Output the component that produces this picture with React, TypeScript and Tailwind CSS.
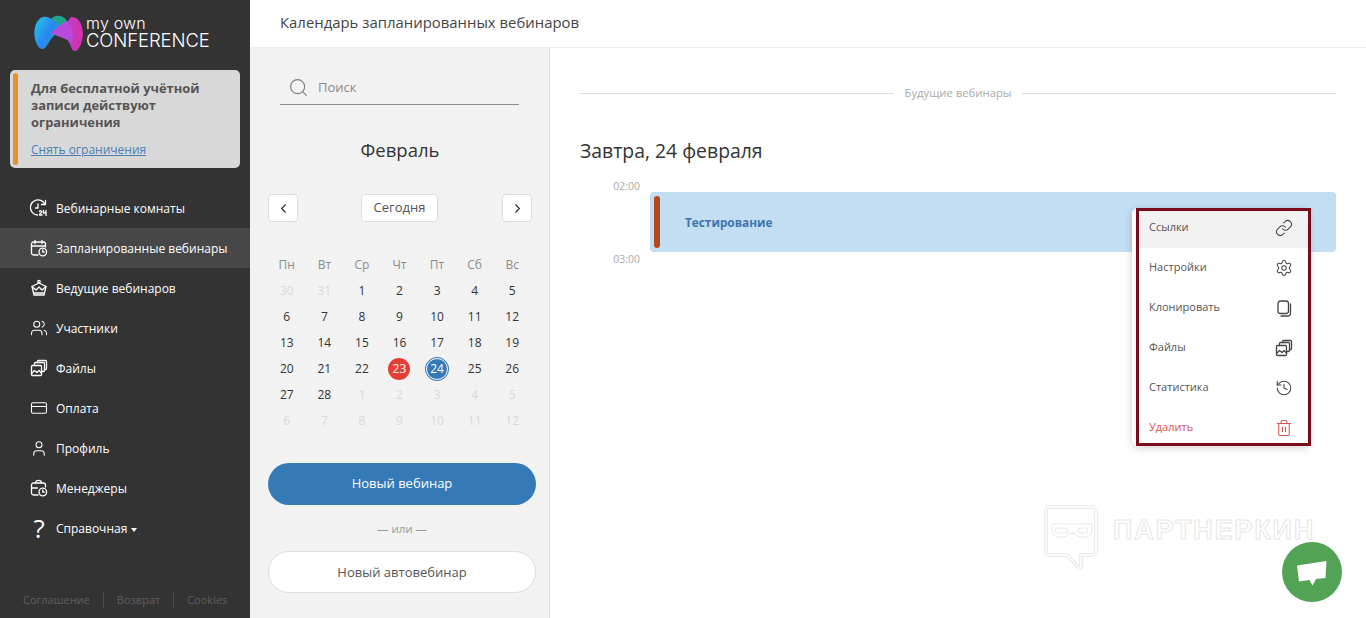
import React from "react";
import { Search, ChevronLeft, ChevronRight, Link, Settings, History, Trash2, User, Users, CreditCard } from "lucide-react";

const font = "font-['Open_Sans','Noto_Sans',sans-serif]";

function I({ children, size = 18 }: { children: React.ReactNode; size?: number }) {
  return (
    <svg width={size} height={size} viewBox="0 0 18 18" fill="none" stroke="currentColor" strokeWidth="1.3" strokeLinecap="round" strokeLinejoin="round">
      {children}
    </svg>
  );
}
const Rooms = () => (
  <I>
    <path d="M15 5.5A7.6 7.6 0 1 0 7.5 16" />
    <path d="M15.5 1.5v4h-4" />
    <path d="M8 5v4H5.5" />
    <path d="M9.5 12.5c.3-1 2.400-1 2.400.2 0 1-2.400 1.800-2.400 3.300h2.600M13.500 11.500v2.500h2.500M16 11.500V16.500" />
  </I>
);
const CalClock = () => (
  <I>
    <path d="M8 16H3.500A2 2 0 0 1 1.500 14V5A2 2 0 0 1 3.500 3h10A2 2 0 0 1 15.500 5V8" />
    <path d="M1.500 7h14M5 1.500v3M12 1.500v3" />
    <circle cx="12.800" cy="13" r="3.800" />
    <path d="M12.800 11v2.200h1.500" />
  </I>
);
const Crown = () => (
  <I>
    <path d="M4 16 2 7.500 9 4l7 3.500L14 16z" />
    <path d="M2 7.500 6 11l3-3 3 3 4-3.500M4.500 14h9" />
    <circle cx="9" cy="2.500" r="1.200" />
  </I>
);
const Files = () => (
  <I>
    <rect x="1.500" y="6.500" width="10" height="10" rx="1" />
    <path d="M4.500 6.500V4.500a1 1 0 0 1 1-1h8a1 1 0 0 1 1 1v7a1 1 0 0 1-1 1h-2" />
    <path d="M7.500 3.500V2.500a1 1 0 0 1 1-1h7a1 1 0 0 1 1 1v7a1 1 0 0 1-1 1h-1" />
    <path d="m1.500 14.500 3-3 2.500 2 2-2 2.500 2.500" />
  </I>
);
const Bag = () => (
  <I>
    <path d="M8 16H3.500A2 2 0 0 1 1.500 14V6A2 2 0 0 1 3.500 4h10A2 2 0 0 1 15.500 6V8" />
    <path d="M1.500 9h6M5.500 4c0-3.500 6-3.500 6 0" />
    <circle cx="12.800" cy="13" r="3.800" />
    <path d="M12.800 11v2.200h1.500" />
  </I>
);
const Clone = () => (
  <I>
    <rect x="3" y="2" width="10.500" height="12.500" rx="2.500" />
    <path d="M15.500 5v9.500a2.500 2.500 0 0 1-2.500 2.500H6" />
  </I>
);

const nav: { label: string; icon: React.ReactNode; active?: boolean; caret?: boolean }[] = [
  { label: "Вебинарные комнаты", icon: <Rooms /> },
  { label: "Запланированные вебинары", icon: <CalClock />, active: true },
  { label: "Ведущие вебинаров", icon: <Crown /> },
  { label: "Участники", icon: <Users size={18} strokeWidth={1.4} /> },
  { label: "Файлы", icon: <Files /> },
  { label: "Оплата", icon: <CreditCard size={18} strokeWidth={1.4} /> },
  { label: "Профиль", icon: <User size={19} strokeWidth={1.4} /> },
  { label: "Менеджеры", icon: <Bag /> },
  { label: "Справочная", icon: <span className="text-[26px] leading-none font-normal">?</span>, caret: true },
];

const days: { d: number; m?: boolean }[] = [
  ...[30, 31].map((d) => ({ d, m: true })),
  ...Array.from({ length: 28 }, (_, i) => ({ d: i + 1 })),
  ...[1, 2, 3, 4, 5, 6, 7, 8, 9, 10, 11, 12].map((d) => ({ d, m: true })),
];

const menu: { label: string; icon: React.ReactNode; red?: boolean; hover?: boolean }[] = [
  { label: "Ссылки", icon: <Link size={18} strokeWidth={1.4} />, hover: true },
  { label: "Настройки", icon: <Settings size={18} strokeWidth={1.4} /> },
  { label: "Клонировать", icon: <Clone /> },
  { label: "Файлы", icon: <Files /> },
  { label: "Статистика", icon: <History size={18} strokeWidth={1.4} /> },
  { label: "Удалить", icon: <Trash2 size={18} strokeWidth={1.4} />, red: true },
];

function Logo() {
  return (
    <div className="flex items-center h-[70px] pb-[5px] pl-[33px] gap-[3px]">
      <svg width="50" height="40" viewBox="0 0 50 40">
        <defs>
          <linearGradient id="lg1" x1="0" y1="0.100" x2="1" y2="0.800">
            <stop offset="0" stopColor="#22c4e6" />
            <stop offset="0.550" stopColor="#2a86f2" />
            <stop offset="1" stopColor="#16b6a6" />
          </linearGradient>
          <linearGradient id="lg2" x1="0" y1="0" x2="1" y2="0">
            <stop offset="0" stopColor="#a84ad8" />
            <stop offset="1" stopColor="#da2fa8" />
          </linearGradient>
        </defs>
        <path d="M17 8C20 1 30 1 34 8L28 17Z" fill="#22a58f" />
        <path d="M10 4C16 3 22 8 28 14L22 22C17 26 15 32 12 35 8 38 4 34 2 26 0 16 3 6 10 4Z" fill="url(#lg1)" />
        <path d="M38 4C46 3 50 12 50 22 49 32 45 38 42 38 38 38 38 30 33 25L26 20Z" fill="url(#lg2)" />
        <path d="M18 20C24 14 30 10 34 8 39 14 41 22 39 30 34 26 26 24 18 20Z" fill="#b84bdc" />
      </svg>
      <div className="text-white font-['Inter','Liberation_Sans',sans-serif] font-light">
        <div className="text-[16px] leading-[15px] tracking-[0.2px]">my own</div>
        <div className="text-[18.500px] leading-[19px] -tracking-[0.1px]">CONFERENCE</div>
      </div>
    </div>
  );
}

function Sidebar() {
  return (
    <aside className="w-[250px] shrink-0 bg-[#333333] flex flex-col h-full">
      <Logo />
      <div className="mx-[10px] w-[230px] h-[98px] bg-[#d8d8d8] rounded-[5px] flex p-[3px]">
        <div className="w-[5px] h-[92px] bg-[#e8912f] rounded-[3px] shrink-0" />
        <div className="pl-[13px] pt-[7px]">
          <div className="text-[12.900px] leading-[17px] font-bold text-[#555555]">
            Для бесплатной учётной<br />записи действуют<br />ограничения
          </div>
          <div className="text-[12px] leading-[17px] mt-[10px] text-[#4a7fb5] underline">Снять ограничения</div>
        </div>
      </div>
      <nav className="mt-[20px] flex flex-col">
        {nav.map((n) => (
          <div key={n.label} className={`h-[40px] flex items-center pl-[30px] text-[12px] text-white ${n.active ? "bg-[#474747]" : ""}`}>
            <span className="w-[18px] h-[18px] flex items-center justify-center shrink-0">{n.icon}</span>
            <span className="ml-[8px] pt-[2px]">{n.label}</span>
            {n.caret && <span className="ml-[4px] w-0 h-0 border-x-[3px] border-x-transparent border-t-[4px] border-t-white mt-[3px]" />}
          </div>
        ))}
      </nav>
      <div className="mt-[44px] flex items-center pl-[23px] text-[11px] text-[#5f5f5f]">
        <span>Соглашение</span>
        <span className="w-px h-[16px] bg-[#4a4a4a] mx-[13px]" />
        <span>Возврат</span>
        <span className="w-px h-[16px] bg-[#4a4a4a] mx-[13px]" />
        <span>Cookies</span>
      </div>
    </aside>
  );
}

function NavBtn({ children }: { children: React.ReactNode }) {
  return (
    <div className="h-[28px] w-[30px] bg-white border border-[#dddddd] rounded-[4px] flex items-center justify-center text-[#333333]">
      {children}
    </div>
  );
}

function CalendarPane() {
  return (
    <div className="w-[300px] shrink-0 bg-[#f2f2f2] border-r border-[#e0e0e0] h-full px-[18px] flex flex-col">
      <div className="mx-[12px] w-[239px] h-[40px] mt-[17px] pt-[6px] border-b border-[#8a8a8a] flex items-center text-[13px] text-[#8a8a8a]">
        <Search size={21} strokeWidth={1.3} className="ml-[8px] text-[#808080]" />
        <span className="ml-[9px]">Поиск</span>
      </div>
      <div className="text-center text-[18.500px] leading-[24px] text-[#333333] mt-[33px] w-[264px]">Февраль</div>
      <div className="w-[264px] flex items-center justify-between mt-[32px]">
        <NavBtn><ChevronLeft size={15} strokeWidth={1.8} /></NavBtn>
        <div className="h-[28px] w-[77px] mr-[1px] bg-white border border-[#dddddd] rounded-[4px] flex items-center justify-center text-[13px] text-[#555555]">Сегодня</div>
        <NavBtn><ChevronRight size={15} strokeWidth={1.8} /></NavBtn>
      </div>
      <div className="w-[263px] grid grid-cols-7 mt-[30px] text-[12px] text-[#8c8c8c] text-center leading-[26px]">
        {["Пн", "Вт", "Ср", "Чт", "Пт", "Сб", "Вс"].map((d) => (
          <div key={d} className="h-[26px]">{d}</div>
        ))}
      </div>
      <div className="w-[263px] grid grid-cols-7 text-[12px] text-center">
        {days.map((x, i) => (
          <div key={i} className="h-[26px] flex items-center justify-center">
            {!x.m && x.d === 23 ? (
              <span className="w-[22px] h-[22px] rounded-full bg-[#e53f35] text-white flex items-center justify-center">23</span>
            ) : !x.m && x.d === 24 ? (
              <span className="w-[24px] h-[24px] rounded-full bg-[#337ab7] text-white flex items-center justify-center border border-[#337ab7] outline-1 -outline-offset-2 outline-white">24</span>
            ) : (
              <span className={x.m ? "text-[#d9d9d9]" : "text-[#333333]"}>{x.d}</span>
            )}
          </div>
        ))}
      </div>
      <div className="w-[268px] h-[42px] mt-[29px] rounded-full bg-[#337ab7] text-white text-[13px] flex items-center justify-center">Новый вебинар</div>
      <div className="w-[268px] text-center text-[11.500px] leading-[16px] text-[#999999] mt-[16px]">— или —</div>
      <div className="w-[268px] h-[42px] mt-[14px] pt-[1px] rounded-full bg-white border border-[#dddddd] text-[#555555] text-[13px] flex items-center justify-center">Новый автовебинар</div>
    </div>
  );
}

const wmBubble = "M5 2h44a3 3 0 0 1 3 3v42a3 3 0 0 1-3 3H37v11a1.500 1.500 0 0 1-3 1L23 50H5a3 3 0 0 1-3-3V5a3 3 0 0 1 3-3Z";
const wmGlasses = "M10 19h36a2 2 0 0 1 2 2v4c0 4-3 7-7 7h-4c-3 0-5-2-6-4h-6c-1 2-3 4-6 4h-4c-4 0-7-3-7-7v-4a2 2 0 0 1 2-2Z";

function Schedule() {
  return (
    <div className="flex-1 min-w-0 relative bg-white h-full pl-[30px] pr-[30px]">
      <div className="flex items-center mt-[36px] h-[18px] text-[11.300px] text-[#aaaaaa]">
        <div className="flex-1 h-px bg-[#dcdcdc]" />
        <span className="px-[10px]">Будущие вебинары</span>
        <div className="flex-1 h-px bg-[#dcdcdc]" />
      </div>
      <h2 className="text-[19.400px] leading-[28px] text-[#333333] mt-[35px]">Завтра, 24 февраля</h2>
      <div className="flex mt-[14px]">
        <div className="w-[60px] shrink-0 text-right text-[10.500px] text-[#aaaaaa] leading-[14px] flex flex-col">
          <span>02:00</span>
          <span className="mt-[59px]">03:00</span>
        </div>
        <div className="ml-[10px] flex-1 h-[60px] mt-[13px] bg-[#c3ddf3] rounded-[4px] flex items-center p-[4px]">
          <div className="w-[6px] h-[52px] rounded-[3px] bg-[#b04a1c] shrink-0" />
          <span className="ml-[25px] pt-[1px] text-[11.800px] font-bold text-[#3d75ad]">Тестирование</span>
        </div>
      </div>

      <div className="absolute left-[582px] top-[160px] w-[177px] h-[238px] bg-white rounded-[6px] shadow-[0_2px_8px_rgba(0,0,0,0.18)] pl-[7px]">
        {menu.map((m) => (
          <div
            key={m.label}
            className={`h-[40px] flex items-center justify-between pl-[10px] pr-[16px] text-[11px] ${m.hover ? "bg-[#f2f2f2]" : ""} ${m.red ? "text-[#d9534f]" : "text-[#555555]"}`}
          >
            <span className="pb-[2px]">{m.label}</span>
            <span className={`w-[18px] h-[18px] flex items-center justify-center ${m.red ? "text-[#d9534f]" : "text-[#444444]"}`}>{m.icon}</span>
          </div>
        ))}
        <div className="absolute left-[4px] -right-[2px] top-0 bottom-0 border-[3px] border-[#7b0a1c] pointer-events-none" />
      </div>

      <div className="absolute left-[494px] top-[457px] flex items-start pointer-events-none">
        <svg width="54" height="65" viewBox="0 0 54 65" fill="none" strokeLinejoin="round">
          <path d={wmBubble} stroke="#e6e6e6" strokeWidth="3.500" />
          <path d={wmBubble} stroke="#ffffff" strokeWidth="1.500" />
          <path d={wmGlasses} stroke="#e8e8e8" strokeWidth="1" />
          <rect x="11" y="23" width="13" height="5" rx="2.500" stroke="#e8e8e8" strokeWidth="1" />
          <rect x="34" y="23" width="10" height="5" rx="2.500" stroke="#e8e8e8" strokeWidth="1" />
        </svg>
        <span className="ml-[15px] mt-[9px] text-[27px] leading-[32px] tracking-[1.800px] text-transparent font-['Liberation_Sans',sans-serif] font-bold [-webkit-text-stroke:1px_#e6e6e6]">ПАРТНЕРКИН</span>
      </div>

      <div className="absolute left-[732px] top-[494px] w-[60px] h-[60px] rounded-full bg-[#52a353] flex items-center justify-center">
        <svg width="30" height="25" viewBox="0 0 30 25" className="mt-[2px]">
          <path d="M0 4.500 29.500 0 28.500 17 19 18 15.500 24.500 12.500 19 2 20.500Z" fill="#ffffff" />
        </svg>
      </div>
    </div>
  );
}

export default function App() {
  return (
    <div className={`flex w-[1366px] h-[618px] overflow-hidden bg-white ${font}`}>
      <Sidebar />
      <div className="flex-1 min-w-0 flex flex-col h-full">
        <header className="h-[48px] shrink-0 border-b border-[#eeeeee] flex items-center pl-[30px] text-[14.900px] text-[#444444] pb-[2px]">
          Календарь запланированных вебинаров
        </header>
        <div className="flex flex-1 min-h-0">
          <CalendarPane />
          <Schedule />
        </div>
      </div>
    </div>
  );
}
